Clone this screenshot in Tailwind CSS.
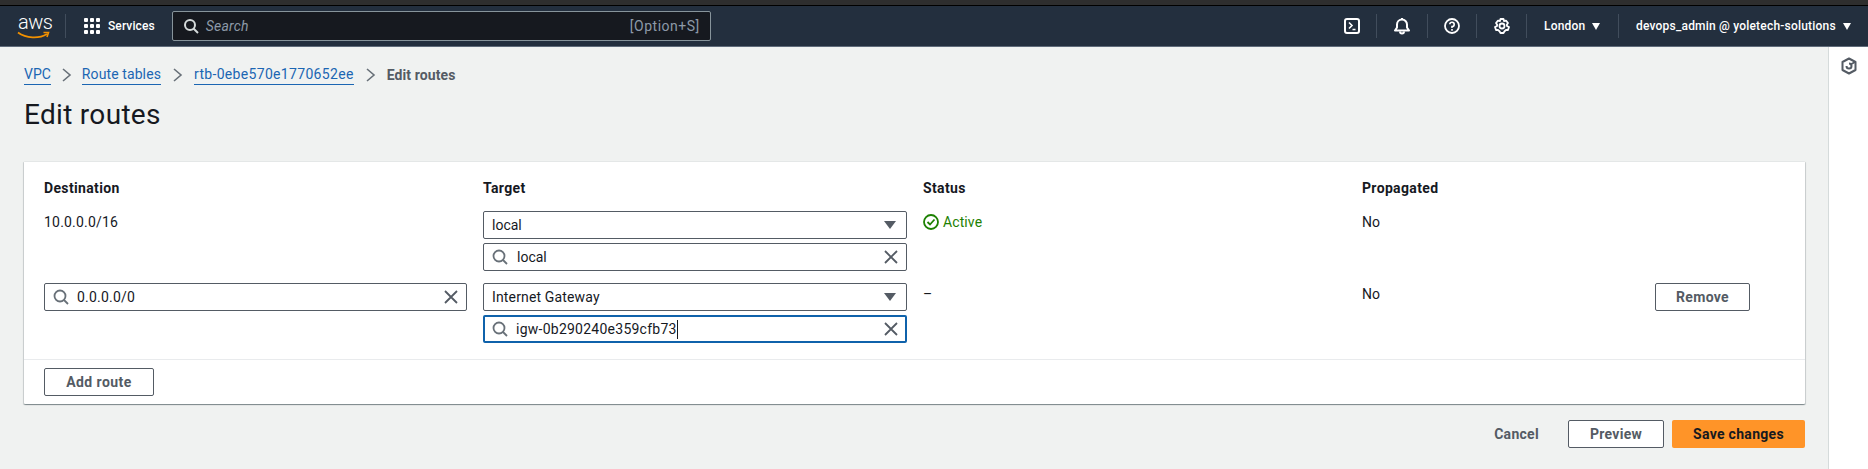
<!DOCTYPE html>
<html lang="en">
<head>
  <meta charset="UTF-8">
  <title>Edit routes</title>
  <script src="https://cdn.jsdelivr.net/npm/@tailwindcss/browser@4"></script>
</head>
<body class="h-[469px] w-[1868px] overflow-hidden bg-[#f0f2f1] font-['Roboto',sans-serif] text-[14px] text-[#16191f]">
  <!-- Browser strip -->
  <div class="h-[6px] bg-[#2e2e2e] border-b border-black"></div>

  <!-- Navbar -->
  <nav class="h-[41px] bg-[#232f3e] border-b border-[#5f6b7a] flex items-center text-white">
    <div class="w-[66px] h-[24px] border-r border-[#414d5c] pl-[18px] relative">
      <span class="block text-[20px] leading-[17px] font-light tracking-[-0.5px]">aws</span>
      <svg class="absolute left-[17px] top-[17px]" width="33" height="9" viewBox="0 0 33 9" fill="none"><path d="M1 1.5C9 7.5 22 8 30 3" stroke="#f29100" stroke-width="1.8"/><path d="M26.5 1.5L31.5 1.5L30 6" stroke="#f29100" stroke-width="1.6"/></svg>
    </div>
    <svg class="ml-[18px]" width="16" height="16" viewBox="0 0 16 16" fill="#fff">
      <rect x="0" y="0" width="4" height="4" rx="1"/><rect x="6" y="0" width="4" height="4" rx="1"/><rect x="12" y="0" width="4" height="4" rx="1"/>
      <rect x="0" y="6" width="4" height="4" rx="1"/><rect x="6" y="6" width="4" height="4" rx="1"/><rect x="12" y="6" width="4" height="4" rx="1"/>
      <rect x="0" y="12" width="4" height="4" rx="1"/><rect x="6" y="12" width="4" height="4" rx="1"/><rect x="12" y="12" width="4" height="4" rx="1"/>
    </svg>
    <span class="ml-[8px] text-[12px] font-medium tracking-[0.1px]">Services</span>

    <div class="ml-[17px] w-[539px] h-[30px] rounded-[2px] border border-[#87949b] bg-[#16191f] flex items-center pl-[10px] pr-[10px] text-[#8d99a8]">
      <svg width="16" height="16" viewBox="0 0 16 16" fill="none" stroke="#d5dbdb" stroke-width="2"><circle cx="7" cy="7" r="5"/><path d="M10.5 10.5L15 15"/></svg>
      <span class="ml-[7px] italic text-[#8d99a8] tracking-[0.2px]">Search</span>
      <span class="ml-auto tracking-[0.5px]">[Option+S]</span>
    </div>

    <div class="ml-auto flex items-center h-[24px]">
      <div class="w-[49px] h-full border-r border-[#414d5c] flex items-center justify-center">
        <svg width="16" height="16" viewBox="0 0 16 16" fill="none" stroke="#fff" stroke-width="2"><rect x="1" y="1" width="14" height="14" rx="2"/><path d="M5 4.5L8 7.5L5 10.5M8.5 11.5H11.5" stroke-width="1.6"/></svg>
      </div>
      <div class="w-[51px] h-full border-r border-[#414d5c] flex items-center justify-center">
        <svg width="16" height="17" viewBox="0 0 16 17" fill="none" stroke="#fff" stroke-width="2"><path d="M1 12.5H15L13 9.5V6.5A5 5 0 0 0 3 6.5V9.5Z" stroke-linejoin="round"/><path d="M8 1V0M6 13.5A2 2 0 0 0 10 13.5"/></svg>
      </div>
      <div class="w-[49px] h-full border-r border-[#414d5c] flex items-center justify-center">
        <svg width="16" height="16" viewBox="0 0 16 16" fill="none" stroke="#fff" stroke-width="1.8"><circle cx="8" cy="8" r="7"/><path d="M5.8 6.2A2.2 2.2 0 1 1 8 8.6V10" stroke-width="1.6"/><path d="M8 11V12.8" stroke-width="1.6"/></svg>
      </div>
      <div class="w-[50px] h-full border-r border-[#414d5c] flex items-center justify-center">
        <svg width="16" height="16" viewBox="0 0 16 16" fill="none" stroke="#fff" stroke-width="1.8"><path d="M6.5 1H9.5L10 3L12 2.6L14 5L12.8 6.7L13 8L15 9L14 12L12 12L10.5 13.3L9.5 15H6.5L5.5 13.3L4 12L2 12L1 9L3 8L3.2 6.7L2 5L4 2.6L6 3Z" stroke-linejoin="round"/><circle cx="8" cy="8" r="2.5"/></svg>
      </div>
      <div class="w-[92px] h-full border-r border-[#414d5c] flex items-center pl-[17px] text-[12px] font-medium tracking-[0.2px]">
        London
        <svg class="ml-[7px]" width="8" height="7" viewBox="0 0 8 7" fill="#fff"><path d="M0 0H8L4 7Z"/></svg>
      </div>
      <div class="w-[249px] h-full flex items-center pl-[17px] text-[12px] font-medium tracking-[0.2px]">
        devops_admin @ yoletech-solutions
        <svg class="ml-[7px]" width="8" height="7" viewBox="0 0 8 7" fill="#fff"><path d="M0 0H8L4 7Z"/></svg>
      </div>
    </div>
  </nav>

  <div class="flex h-[422px]">
    <main class="w-[1828px] pl-[24px] pr-[23px]">
      <!-- Breadcrumbs -->
      <div class="h-[20px] mt-[18px] flex items-center text-[14px]">
        <a class="text-[#1b66b3] border-b border-[#1b66b3] leading-[19px]">VPC</a>
        <svg class="mx-[10px]" width="11" height="16" viewBox="0 0 11 16" fill="none" stroke="#687078" stroke-width="1.6"><path d="M2 2L9 8L2 14"/></svg>
        <a class="text-[#1b66b3] border-b border-[#1b66b3] leading-[19px] tracking-[0.1px]">Route tables</a>
        <svg class="mx-[11px]" width="11" height="16" viewBox="0 0 11 16" fill="none" stroke="#687078" stroke-width="1.6"><path d="M2 2L9 8L2 14"/></svg>
        <a class="text-[#1b66b3] border-b border-[#1b66b3] leading-[19px] tracking-[0.32px]">rtb-0ebe570e1770652ee</a>
        <svg class="mx-[11px]" width="11" height="16" viewBox="0 0 11 16" fill="none" stroke="#687078" stroke-width="1.6"><path d="M2 2L9 8L2 14"/></svg>
        <span class="font-bold text-[#545b64] tracking-[0.1px]">Edit routes</span>
      </div>
      <h1 class="mt-[12px] text-[28px] leading-[36px] font-normal tracking-[0.3px]">Edit routes</h1>

      <!-- Routes card -->
      <section class="mt-[28px] h-[243px] bg-white border-t border-[#e4e7e7] rounded-[1px] shadow-[0_1px_1px_0_rgba(0,28,36,0.3),1px_1px_1px_0_rgba(0,28,36,0.15),-1px_1px_1px_0_rgba(0,28,36,0.15)]">
        <div class="h-[198px] px-[20px] pt-[16px] border-b border-[#e9ebed]">
          <div class="grid grid-cols-[423px_424px_423px_277px_95px] gap-x-4 font-bold leading-[20px] tracking-[0.35px]">
            <span>Destination</span><span>Target</span><span>Status</span><span>Propagated</span>
          </div>

          <!-- Row 1 -->
          <div class="mt-[13px] grid grid-cols-[423px_424px_423px_277px_95px] gap-x-4">
            <span class="leading-[22px] tracking-[0.2px]">10.0.0.0/16</span>
            <div class="flex flex-col gap-[4px]">
              <div class="h-[28px] rounded-[2px] border border-[#545b64] flex items-center pl-[8px] pr-[10px]">
                local
                <svg class="ml-auto" width="12" height="8" viewBox="0 0 12 8" fill="#545b64"><path d="M0 0H12L6 8Z"/></svg>
              </div>
              <div class="h-[28px] rounded-[2px] border border-[#545b64] flex items-center pl-[8px] pr-[8px]">
                <svg width="16" height="16" viewBox="0 0 16 16" fill="none" stroke="#687078" stroke-width="1.8"><circle cx="7" cy="7" r="5.5"/><path d="M11 11L15 15"/></svg>
                <span class="ml-[9px]">local</span>
                <svg class="ml-auto" width="14" height="14" viewBox="0 0 14 14" fill="none" stroke="#545b64" stroke-width="1.8"><path d="M1 1L13 13M13 1L1 13"/></svg>
              </div>
            </div>
            <div class="flex items-start h-[22px] text-[#1d8102]">
              <svg class="mt-[3px] mr-[4px]" width="16" height="16" viewBox="0 0 16 16" fill="none" stroke="#1d8102" stroke-width="1.8"><circle cx="8" cy="8" r="7"/><path d="M4.5 8L7 10.5L11.5 5.5"/></svg>
              <span class="leading-[22px] tracking-[0.1px]">Active</span>
            </div>
            <span class="leading-[22px]">No</span>
          </div>

          <!-- Row 2 -->
          <div class="mt-[12px] grid grid-cols-[423px_424px_423px_277px_95px] gap-x-4">
            <div class="h-[28px] rounded-[2px] border border-[#545b64] flex items-center pl-[8px] pr-[8px]">
              <svg width="16" height="16" viewBox="0 0 16 16" fill="none" stroke="#687078" stroke-width="1.8"><circle cx="7" cy="7" r="5.5"/><path d="M11 11L15 15"/></svg>
              <span class="ml-[8px] tracking-[0.2px]">0.0.0.0/0</span>
              <svg class="ml-auto" width="14" height="14" viewBox="0 0 14 14" fill="none" stroke="#545b64" stroke-width="1.8"><path d="M1 1L13 13M13 1L1 13"/></svg>
            </div>
            <div class="flex flex-col gap-[4px]">
              <div class="h-[28px] rounded-[2px] border border-[#545b64] flex items-center pl-[8px] pr-[10px]">
                <span class="tracking-[0.15px]">Internet Gateway</span>
                <svg class="ml-auto" width="12" height="8" viewBox="0 0 12 8" fill="#545b64"><path d="M0 0H12L6 8Z"/></svg>
              </div>
              <div class="h-[28px] rounded-[2px] border-2 border-[#0f62ab] flex items-center pl-[7px] pr-[7px]">
                <svg width="16" height="16" viewBox="0 0 16 16" fill="none" stroke="#687078" stroke-width="1.8"><circle cx="7" cy="7" r="5.5"/><path d="M11 11L15 15"/></svg>
                <span class="ml-[8px] border-r border-[#16191f] leading-[19px] tracking-[0.25px]">igw-0b290240e359cfb73</span>
                <svg class="ml-auto" width="14" height="14" viewBox="0 0 14 14" fill="none" stroke="#545b64" stroke-width="1.8"><path d="M1 1L13 13M13 1L1 13"/></svg>
              </div>
            </div>
            <span class="leading-[22px]">–</span>
            <span class="leading-[22px]">No</span>
            <button class="h-[28px] rounded-[2px] border border-[#545b64] bg-white font-bold text-[#545b64] tracking-[0.3px]">Remove</button>
          </div>
        </div>
        <div class="px-[20px] pt-[8px]">
          <button class="w-[110px] h-[28px] rounded-[2px] border border-[#545b64] bg-white font-bold text-[#545b64] tracking-[0.45px]">Add route</button>
        </div>
      </section>

      <!-- Actions -->
      <div class="mt-[16px] flex items-center justify-end">
        <span class="mr-[29px] font-bold text-[#545b64] tracking-[0.3px]">Cancel</span>
        <button class="w-[96px] h-[28px] rounded-[2px] border border-[#545b64] bg-white font-bold text-[#545b64] tracking-[0.3px]">Preview</button>
        <button class="ml-[8px] w-[133px] h-[28px] rounded-[2px] bg-[#ff9428] font-bold text-[#16191f] tracking-[0.3px]">Save changes</button>
      </div>
    </main>

    <!-- Side rail -->
    <aside class="flex-1 bg-white border-l border-[#d5dbdb] flex justify-center pt-[10px]">
      <svg width="16" height="18" viewBox="0 0 16 18" fill="none" stroke="#545b64" stroke-width="2"><path d="M8 1.5L14.5 5V13L8 16.5L1.5 13V5Z" stroke-linejoin="round"/><path d="M5.5 9A2.5 2.5 0 1 0 8 6.5"/><path d="M9.5 7.5L14 5"/></svg>
    </aside>
  </div>
</body>
</html>
